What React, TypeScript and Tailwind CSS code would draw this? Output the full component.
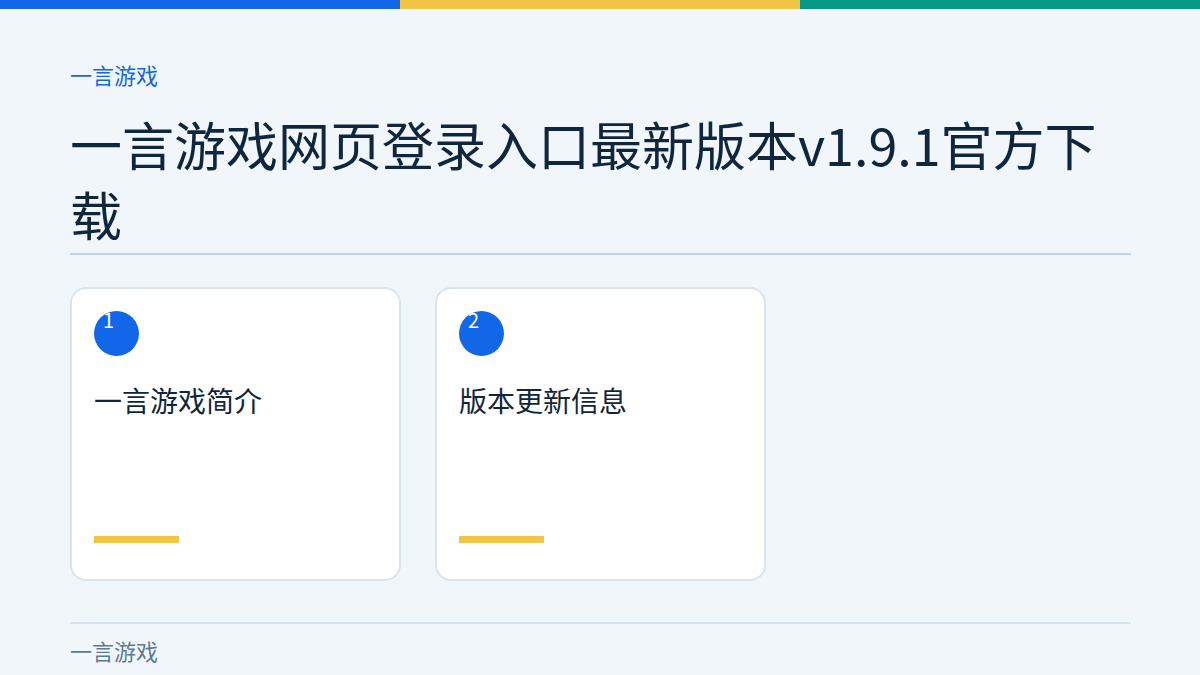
import React from 'react';

const cards = [
  { n: 1, title: '一言游戏简介' },
  { n: 2, title: '版本更新信息' },
];

const App: React.FC = () => {
  return (
    <div
      className="min-h-screen bg-[#f1f6fb] text-[#10263d]"
      style={{ fontFamily: '"Noto Sans CJK SC", "Noto Sans", sans-serif' }}
    >
      <div className="flex h-[9px]">
        <div className="flex-1 bg-[#1167e8]" />
        <div className="flex-1 bg-[#f2c546]" />
        <div className="flex-1 bg-[#079a87]" />
      </div>

      <div className="pl-[70px] pr-[69px] pt-[49px]">
        <div className="text-[22px] leading-[33px] text-[#1167e8]">一言游戏</div>
        <h1 className="mt-[18px] border-b-2 border-[#c3d3e2] pb-[4px] text-[52px] leading-[70px] font-normal">
          一言游戏网页登录入口最新版本v1.9.1官方下载
        </h1>

        <div className="mt-[32px] grid grid-cols-3 gap-[34px]">
          {cards.map((c) => (
            <div
              key={c.n}
              className="flex h-[294px] flex-col rounded-2xl border-2 border-[#d8e5ed] bg-white px-[22px] pt-[22px]"
            >
              <div className="h-[45px] w-[45px] rounded-full bg-[#1167e8] pl-[9px] text-[20px] leading-[18px] text-white">
                {c.n}
              </div>
              <div className="mt-[24px] text-[28px] leading-[40px]">{c.title}</div>
              <div className="mt-auto mb-[36px] h-[7px] w-[85px] bg-[#f2c546]" />
            </div>
          ))}
        </div>

        <div className="mt-[41px] border-t-2 border-[#d8e5ed] pt-[10px] text-[22px] leading-[33px] text-[#5f7a90]">
          一言游戏
        </div>
      </div>
    </div>
  );
};

export default App;
